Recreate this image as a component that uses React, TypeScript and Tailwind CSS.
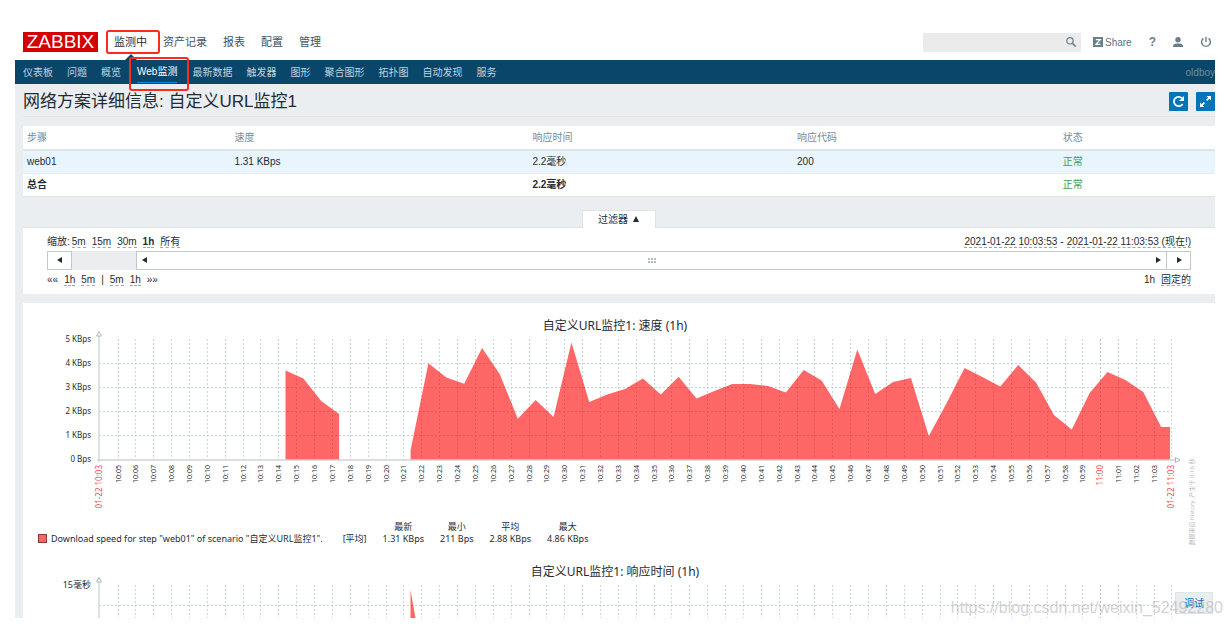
import { Fragment } from "react";

const MAIN_MENU = ["监测中", "资产记录", "报表", "配置", "管理"];

const SUB_MENU = [
  "仪表板",
  "问题",
  "概览",
  "Web监测",
  "最新数据",
  "触发器",
  "图形",
  "聚合图形",
  "拓扑图",
  "自动发现",
  "服务",
];

// One sample per minute starting at 10:14, null = no data
const SPEED: (number | null)[] = [
  3.73, 3.4, 2.46, 1.92, null, null, null, 0.42, 4.03, 3.44, 3.18, 4.67, 3.56, 1.72, 2.5, 1.79, 4.9,
  2.42, 2.73, 2.96, 3.4, 2.73, 3.47, 2.56, 2.88, 3.17, 3.17, 3.08, 2.81, 3.75, 3.31, 2.12, 4.6, 2.75,
  3.25, 3.42, 1.0, 2.38, 3.83, 3.46, 3.06, 3.96, 3.23, 1.88, 1.27, 2.79, 3.67, 3.33, 2.83, 1.37,
];

const LEGEND = [
  { label: "最新", value: "1.31 KBps" },
  { label: "最小", value: "211 Bps" },
  { label: "平均", value: "2.88 KBps" },
  { label: "最大", value: "4.86 KBps" },
];

const CHART_FONT = "font-['Noto_Sans','Noto_Sans_CJK_SC',sans-serif]";

const LEFT = 76;
const RIGHT = 1148;
const TOP = 9;
const BASE = 130;
const STEP = 17.87;

// 10:05 ... 11:03
const TICKS = Array.from({ length: 59 }, (_, i) => {
  const m = 5 + i;
  const label = m < 60 ? `10:${String(m).padStart(2, "0")}` : `11:${String(m - 60).padStart(2, "0")}`;
  return { label, x: Math.round(94.5 + i * STEP) + 0.5, hour: m === 60 };
});

function speedAreas() {
  const areas: string[] = [];
  let run: [number, number][] = [];
  const flush = () => {
    if (run.length) {
      const first = run[0][0];
      const last = run[run.length - 1][0];
      areas.push([[first, BASE], ...run, [last, BASE]].map((p) => p.join(",")).join(" "));
    }
    run = [];
  };
  SPEED.forEach((v, i) => {
    if (v === null) {
      flush();
      return;
    }
    run.push([262.5 + i * STEP, BASE - v * 24]);
  });
  // last value holds until the end of the period
  run.push([RIGHT - 1, run[run.length - 1][1]]);
  flush();
  return areas;
}

function Grid({ rows }: { rows: number[] }) {
  return (
    <>
      <g stroke="#ccd5d9" strokeDasharray="2 2">
        {TICKS.map((t) => (
          <line key={t.label} x1={t.x} x2={t.x} y1={TOP} y2={BASE} stroke={t.hour ? "#acbbc2" : undefined} />
        ))}
        <line x1={RIGHT + 0.5} x2={RIGHT + 0.5} y1={TOP} y2={BASE} />
        {rows.map((y) => (
          <line key={y} x1={LEFT} x2={RIGHT} y1={y} y2={y} />
        ))}
      </g>
      <line x1={LEFT} x2={LEFT} y1="6" y2={BASE + 2} stroke="#ccd5d9" strokeWidth="1.4" />
      <path d={`M${LEFT - 2.5} 6 L${LEFT} 1.5 L${LEFT + 2.5} 6 Z`} fill="#fff" stroke="#acbbc2" />
    </>
  );
}

function SpeedChart() {
  return (
    <svg viewBox="0 0 1192 185" className={`block w-full overflow-visible ${CHART_FONT}`} fill="#1f2c33">
      <Grid rows={[33.5, 57.5, 81.5, 105.5]} />
      {speedAreas().map((points) => (
        <polygon key={points} points={points} fill="#ff0000" fillOpacity="0.6" />
      ))}
      <line x1={LEFT - 2} x2={RIGHT + 5} y1={BASE} y2={BASE} stroke="#ccd5d9" strokeWidth="1.4" />
      <path d={`M${RIGHT + 4.5} ${BASE - 2.5} L${RIGHT + 9} ${BASE} L${RIGHT + 4.5} ${BASE + 2.5} Z`} fill="#fff" stroke="#acbbc2" />
      <g fontSize="8" textAnchor="end">
        {["5 KBps", "4 KBps", "3 KBps", "2 KBps", "1 KBps", "0 Bps"].map((t, i) => (
          <text key={t} x="68" y={12 + i * 24}>{t}</text>
        ))}
      </g>
      <g fontSize="7" textAnchor="end">
        {TICKS.map((t) => (
          <text
            key={t.label}
            transform={`translate(${t.x + 2} 135) rotate(-90)`}
            fontSize={t.hour ? 8 : 7}
            fill={t.hour ? "#f24b4b" : undefined}
          >
            {t.label}
          </text>
        ))}
      </g>
      <g fontSize="8" textAnchor="end" fill="#f24b4b">
        <text transform={`translate(${LEFT + 3} 135) rotate(-90)`}>01-22 10:03</text>
        <text transform={`translate(${RIGHT + 3} 135) rotate(-90)`}>01-22 11:03</text>
      </g>
      <text transform="translate(1171 127) rotate(-90)" fontSize="6" textAnchor="end" fill="#b8b8b8">
        数据来自 history. 产生于 0.16 秒.
      </text>
    </svg>
  );
}

function ResponseChart() {
  return (
    <svg viewBox="0 0 1192 185" className={`block w-full ${CHART_FONT}`} fill="#1f2c33">
      <Grid rows={[29.5, 49.5, 69.5, 89.5, 109.5]} />
      <polygon points="387.5,130 387.5,14 406,118 406,130" fill="#ff0000" fillOpacity="0.6" />
      <text x="68" y="12" fontSize="9" textAnchor="end">15毫秒</text>
    </svg>
  );
}

function ZoomLink({ children, active }: { children: string; active?: boolean }) {
  return (
    <a
      href="#"
      className={`border-b border-dashed border-[#9aa7ae] leading-[11px] ${active ? "font-bold" : ""}`}
    >
      {children}
    </a>
  );
}

function Arrow({ dir }: { dir: "left" | "right" | "up" }) {
  const d = { left: "M6 1v6L1 4z", right: "M2 1v6l5-3z", up: "M1 7h6L4 1z" }[dir];
  return (
    <svg viewBox="0 0 8 8" className="h-2 w-2" fill="#1f2c33">
      <path d={d} />
    </svg>
  );
}

function Header() {
  return (
    <header className="flex h-9 items-center pl-2 text-[11px] text-[#3c5563]">
      <a href="#" className="flex h-5 w-[75px] items-center justify-center bg-[#d40000] text-[19px] leading-5 text-white">
        ZABBIX
      </a>
      <nav className="ml-4 flex gap-4">
        {MAIN_MENU.map((item, i) => (
          <a key={item} href="#" className={`relative ${i === 0 ? "text-[#1f2c33]" : ""}`}>
            {item}
            {i === 0 && (
              <>
                <span className="absolute -top-1 -right-[13px] -left-2 h-6 rounded-[3px] border-2 border-[#fb2b1d]" />
                <svg viewBox="0 0 12 6" className="absolute top-5 left-[11px] h-1.5 w-3" fill="#0a466a">
                  <path d="M0 6L6 0l6 6z" />
                </svg>
              </>
            )}
          </a>
        ))}
      </nav>
      <form className="ml-auto flex h-[19px] w-[158px] items-center bg-[#ebebeb]">
        <input type="text" aria-label="搜索" className="h-full min-w-0 flex-1 bg-transparent px-1 text-[10px] outline-none" />
        <button type="button" aria-label="搜索" className="mr-1">
          <svg viewBox="0 0 12 12" className="h-3 w-3" fill="none" stroke="#6b7f8a" strokeWidth="1.2">
            <circle cx="5" cy="4.8" r="3.2" />
            <path d="M7.3 7.2l3.4 3.4" strokeWidth="1.6" />
          </svg>
        </button>
      </form>
      <a href="#" className="ml-3 flex items-center gap-0.5 text-[10px] text-[#5c707b]">
        <svg viewBox="0 0 10 10" className="h-2.5 w-2.5">
          <rect width="10" height="10" fill="#6b7f8a" />
          <path d="M2.8 2.6h4.4L3 7.4h4.4" fill="none" stroke="#fff" strokeWidth="1.3" />
        </svg>
        Share
      </a>
      <a href="#" className="ml-[17px] text-[12px] font-bold text-[#6b7f8a]">?</a>
      <a href="#" aria-label="用户" className="ml-4">
        <svg viewBox="0 0 12 12" className="h-3 w-3" fill="#6b7f8a">
          <circle cx="6" cy="3.8" r="2.7" />
          <path d="M1 11V9.6C1 8 3.4 7.4 6 7.4s5 .6 5 2.2V11z" />
        </svg>
      </a>
      <a href="#" aria-label="退出" className="mr-[3px] ml-4">
        <svg viewBox="0 0 12 12" className="h-3 w-3" fill="none" stroke="#6b7f8a" strokeWidth="1.4">
          <path d="M3.4 2.4a4.4 4.4 0 1 0 5.2 0M6 .8V6" />
        </svg>
      </a>
    </header>
  );
}

function SubNav() {
  return (
    <nav className="flex h-6 items-center gap-3.5 bg-[#0a466a] pl-2 text-[10px] text-[#c3d3dd]">
      {SUB_MENU.map((item) =>
        item === "Web监测" ? (
          <a key={item} href="#" className="relative mr-px ml-0.5 flex h-[22px] items-center border-b border-[#0a8ae6] text-white">
            {item}
            <span className="absolute -top-1 -right-3 -left-2 h-[34px] rounded-[3px] border-2 border-[#fb2b1d]" />
          </a>
        ) : (
          <a key={item} href="#">{item}</a>
        )
      )}
      <span className="ml-auto text-[#6c8ea3]">oldboy</span>
    </nav>
  );
}

function StepsTable() {
  return (
    <table className="mt-[9px] w-full table-fixed border-b border-[#dfe4e7] bg-white text-left">
      <thead>
        <tr className="h-6 border-b-2 border-[#dfe4e7] text-[#768d99]">
          <th className="w-[17.4%] px-1 font-normal">步骤</th>
          <th className="w-[25%] px-1 font-normal">速度</th>
          <th className="w-[22.2%] px-1 font-normal">响应时间</th>
          <th className="w-[22.3%] px-1 font-normal">响应代码</th>
          <th className="px-1 font-normal">状态</th>
        </tr>
      </thead>
      <tbody>
        <tr className="h-[23px] border-b border-[#ebeef0] bg-[#e8f5ff]">
          <td className="px-1">web01</td>
          <td className="px-1">1.31 KBps</td>
          <td className="px-1">2.2毫秒</td>
          <td className="px-1">200</td>
          <td className="px-1 text-[#429e47]">正常</td>
        </tr>
        <tr className="h-[23px]">
          <td className="px-1 font-bold">总合</td>
          <td className="px-1" />
          <td className="px-1 font-bold">2.2毫秒</td>
          <td className="px-1" />
          <td className="px-1 text-[#429e47]">正常</td>
        </tr>
      </tbody>
    </table>
  );
}

function Filter() {
  return (
    <section className="mt-[13px]">
      <div className="flex justify-center">
        <button type="button" className="relative -mb-px flex h-[18px] w-[74px] items-center justify-center gap-1 border border-b-0 border-[#dfe4e7] bg-white">
          过滤器 <Arrow dir="up" />
        </button>
      </div>
      <div className="border-t border-[#dfe4e7] bg-white px-6 pt-2 pb-2">
        <div className="flex h-[15px] items-start justify-between leading-3">
          <div className="flex gap-1.5">
            <span className="-mr-1">缩放:</span>
            <ZoomLink>5m</ZoomLink>
            <ZoomLink>15m</ZoomLink>
            <ZoomLink>30m</ZoomLink>
            <ZoomLink active>1h</ZoomLink>
            <ZoomLink>所有</ZoomLink>
          </div>
          <div className="flex gap-[3px]">
            <ZoomLink>2021-01-22 10:03:53</ZoomLink>
            <span>-</span>
            <ZoomLink>2021-01-22 11:03:53 (现在!)</ZoomLink>
          </div>
        </div>
        <div className="flex h-[19px] bg-[#ebeef0]">
          <button type="button" aria-label="后退" className="flex w-[25px] items-center justify-center border border-[#c0cace] bg-white">
            <Arrow dir="left" />
          </button>
          <div className="ml-16 flex flex-1 items-center justify-between border border-[#c0cace] bg-white px-1">
            <Arrow dir="left" />
            <svg viewBox="0 0 8 5" className="h-[5px] w-2" fill="#b3bfc5">
              {[0, 3, 6].map((x) => (
                <Fragment key={x}>
                  <rect x={x} y="0" width="2" height="2" />
                  <rect x={x} y="3" width="2" height="2" />
                </Fragment>
              ))}
            </svg>
            <Arrow dir="right" />
          </div>
          <button type="button" aria-label="前进" className="flex w-6 items-center justify-center border border-l-0 border-[#c0cace] bg-white">
            <Arrow dir="right" />
          </button>
        </div>
        <div className="mt-1 flex h-3 justify-between leading-3">
          <div className="flex items-start gap-1.5">
            <a href="#">««</a>
            <ZoomLink>1h</ZoomLink>
            <ZoomLink>5m</ZoomLink>
            <span>|</span>
            <ZoomLink>5m</ZoomLink>
            <ZoomLink>1h</ZoomLink>
            <a href="#">»»</a>
          </div>
          <div className="flex items-start gap-1.5">
            <span>1h</span>
            <ZoomLink>固定的</ZoomLink>
          </div>
        </div>
      </div>
    </section>
  );
}

export default function App() {
  return (
    <div className="relative flex h-screen flex-col overflow-hidden bg-white pt-6 pr-4 pb-2 pl-[15px] font-['Liberation_Sans','Noto_Sans_CJK_SC',sans-serif] text-[10px] text-[#1f2c33]">
      <Header />
      <SubNav />

      <main className="min-h-0 flex-1 overflow-hidden bg-[#ebeef0] pl-2">
        <div className="flex h-[33px] items-center justify-between border-b border-[#dfe4e7]">
          <h1 className="pt-1 text-[17px]">网络方案详细信息: 自定义URL监控1</h1>
          <div className="flex gap-2 pt-0.5">
            <button type="button" aria-label="刷新" className="flex h-[19px] w-[19px] items-center justify-center rounded-[1px] bg-[#0275b8]">
              <svg viewBox="0 0 13 13" className="h-[13px] w-[13px]" fill="none" stroke="#fff" strokeWidth="1.8">
                <path d="M10.6 9A4.7 4.7 0 1 1 10 3.2" />
                <path d="M12 1v5H7z" fill="#fff" stroke="none" />
              </svg>
            </button>
            <button type="button" aria-label="全屏" className="flex h-[19px] w-[19px] items-center justify-center rounded-[1px] bg-[#0275b8]">
              <svg viewBox="0 0 13 13" className="h-[13px] w-[13px]" fill="#fff">
                <path d="M7.5 1H12v4.5zM1 7.5V12h4.5z" />
                <path d="M10.5 2.5L7.6 5.4M2.5 10.5l2.9-2.9" stroke="#fff" strokeWidth="1.6" />
              </svg>
            </button>
          </div>
        </div>

        <StepsTable />
        <Filter />

        <section className={`mt-[9px] bg-white text-[9px] ${CHART_FONT}`}>
          <h2 className="pt-3.5 pr-2 text-center text-[12px] leading-[18px] text-[#1f2c33]">自定义URL监控1: 速度 (1h)</h2>
          <div className="-mt-[5px]">
            <SpeedChart />
          </div>

          {/* Legend */}
          <table className="mt-1.5 ml-[15px] text-center leading-3">
            <thead>
              <tr>
                <th />
                <th />
                {LEGEND.map((l) => (
                  <th key={l.label} className="px-2 font-normal">{l.label}</th>
                ))}
              </tr>
            </thead>
            <tbody>
              <tr>
                <td className="pr-5">
                  <span className="flex items-center gap-1">
                    <span className="h-[9px] w-[9px] border border-[#8a3a3a] bg-[#ff6464]" />
                    Download speed for step "web01" of scenario "自定义URL监控1".
                  </span>
                </td>
                <td className="pr-2">[平均]</td>
                {LEGEND.map((l) => (
                  <td key={l.label} className="px-2">{l.value}</td>
                ))}
              </tr>
            </tbody>
          </table>

          <h2 className="mt-[18px] pr-2 text-center text-[12px] leading-[18px]">自定义URL监控1: 响应时间 (1h)</h2>
          <div className="-mt-[5px]">
            <ResponseChart />
          </div>
        </section>
      </main>

      <button type="button" className="absolute right-[18px] bottom-3 h-[22px] w-[38px] border border-[#dfe4e7] bg-[#ebeef0] text-[10px] text-[#0275b8]">
        调试
      </button>
      <span className="pointer-events-none absolute right-2 bottom-2 text-[16px] leading-5 text-[#b4b4b4]/60">
        https://blog.csdn.net/weixin_52492280
      </span>
    </div>
  );
}
